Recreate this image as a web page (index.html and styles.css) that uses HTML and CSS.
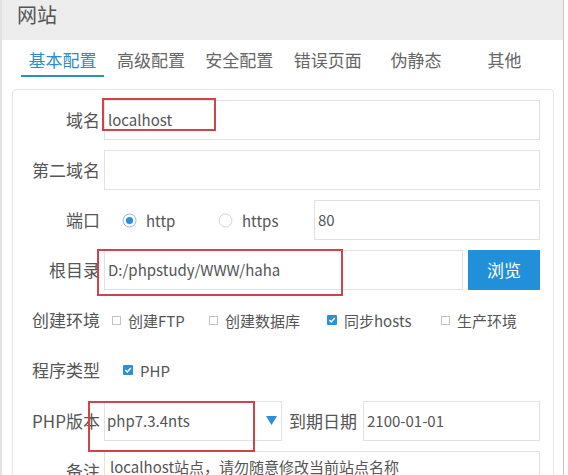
FILE: index.html
```html
<!DOCTYPE html>
<html lang="zh-CN">
<head>
<meta charset="utf-8">
<title>网站</title>
<link rel="stylesheet" href="styles.css">
</head>
<body>
<div class="dialog">
  <div class="header">网站</div>
  <div class="tabs">
    <div class="tab active">基本配置</div>
    <div class="tab">高级配置</div>
    <div class="tab">安全配置</div>
    <div class="tab">错误页面</div>
    <div class="tab">伪静态</div>
    <div class="tab">其他</div>
  </div>
  <div class="panel">
    <div class="row">
      <div class="label">域名</div>
      <div class="input">localhost</div>
    </div>
    <div class="row">
      <div class="label">第二域名</div>
      <div class="input"></div>
    </div>
    <div class="row">
      <div class="label">端口</div>
      <div class="radio radio-http">
        <svg width="15" height="15" viewBox="0 0 15 15"><circle cx="7.5" cy="7.5" r="6.5" fill="#fff" stroke="#8cc1ea" stroke-width="1"/><circle cx="7.5" cy="7.5" r="3.6" fill="#2b8fd9"/></svg>
        <span>http</span>
      </div>
      <div class="radio radio-https">
        <svg width="15" height="15" viewBox="0 0 15 15"><circle cx="7.5" cy="7.5" r="6.5" fill="#fff" stroke="#d8d8d8" stroke-width="1"/></svg>
        <span>https</span>
      </div>
      <div class="input">80</div>
    </div>
    <div class="row">
      <div class="label">根目录</div>
      <div class="input">D:/phpstudy/WWW/haha</div>
      <div class="btn">浏览</div>
    </div>
    <div class="row">
      <div class="label">创建环境</div>
      <div class="check check-ftp"><span class="box"></span><span>创建FTP</span></div>
      <div class="check check-db"><span class="box"></span><span>创建数据库</span></div>
      <div class="check check-hosts">
        <svg class="box-on" width="10" height="10" viewBox="0 0 10 10"><rect width="10" height="10" rx="1" fill="#2b8fd9"/><path d="M2.3 5.1 L4.2 7 L7.8 3" fill="none" stroke="#fff" stroke-width="1.4"/></svg>
        <span>同步hosts</span>
      </div>
      <div class="check check-prod"><span class="box"></span><span>生产环境</span></div>
    </div>
    <div class="row">
      <div class="label">程序类型</div>
      <div class="check check-php">
        <svg class="box-on" width="10" height="10" viewBox="0 0 10 10"><rect width="10" height="10" rx="1" fill="#2b8fd9"/><path d="M2.3 5.1 L4.2 7 L7.8 3" fill="none" stroke="#fff" stroke-width="1.4"/></svg>
        <span>PHP</span>
      </div>
    </div>
    <div class="row">
      <div class="label">PHP版本</div>
      <div class="select">
        <span>php7.3.4nts</span>
        <svg class="arrow" width="11" height="9" viewBox="0 0 11 9"><polygon points="0,0 11,0 5.5,9" fill="#2b8fd9"/></svg>
      </div>
      <div class="label-inline">到期日期</div>
      <div class="input">2100-01-01</div>
    </div>
    <div class="row row-note">
      <div class="label">备注</div>
      <div class="textarea">localhost站点，请勿随意修改当前站点名称</div>
    </div>
  </div>
</div>
<div class="mark mark-domain"></div>
<div class="mark mark-root"></div>
<div class="mark mark-php"></div>
</body>
</html>
```
FILE: styles.css
```css
* { box-sizing: border-box; }
html, body {
  margin: 0;
  padding: 0;
  width: 568px;
  height: 475px;
  overflow: hidden;
  background: #fff;
  font-family: "Noto Sans CJK SC", "Noto Sans", sans-serif;
  color: #555;
}
.dialog {
  width: 564px;
  height: 475px;
  border-left: 2px solid #e2e2e2;
  border-right: 1px solid #c8c8c8;
  background: #fff;
}
.header {
  height: 40px;
  background: #ededed;
  padding-left: 15px;
  font-size: 20px;
  line-height: 30px;
  color: #555;
}
.tabs {
  display: flex;
  gap: 5.4px;
  padding-left: 19px;
}
.tab {
  width: 83px;
  text-align: center;
  font-size: 17px;
  line-height: 26px;
  padding-top: 7px;
  padding-bottom: 2px;
  border-bottom: 2px solid transparent;
  color: #666;
}
.tab.active {
  color: #2a8dcc;
  border-bottom-color: #2a8dcc;
}
.panel {
  margin: 12px 0 0 10px;
  width: 542px;
  height: 420px;
  border: 1px solid #e6e6e6;
  border-radius: 4px;
  padding: 10px 13px 0 0;
}
.row {
  display: flex;
  align-items: center;
  height: 40px;
  margin-bottom: 10.1px;
}
.label {
  width: 87px;
  flex: none;
  text-align: right;
  font-size: 17px;
  line-height: 40px;
  margin-right: 4px;
  color: #555;
}
.input {
  flex: 1;
  height: 40px;
  border: 1px solid #e2e2e2;
  padding-left: 3px;
  font-size: 15px;
  line-height: 38px;
  color: #555;
  white-space: nowrap;
  overflow: hidden;
}
.radio {
  display: flex;
  align-items: center;
  flex: none;
  font-size: 15px;
  color: #555;
}
.radio svg { margin-right: 9px; }
.radio-http { width: 114px; padding-left: 18px; }
.radio-https { width: 96px; }
.btn {
  flex: none;
  width: 72px;
  height: 40px;
  margin-left: 5px;
  background: #2190d8;
  color: #fff;
  font-size: 17px;
  line-height: 40px;
  text-align: center;
}
.check {
  display: flex;
  align-items: center;
  flex: none;
  font-size: 15px;
  color: #555;
}
.check .box {
  width: 9px;
  height: 9px;
  border: 1px solid #c4c4c4;
  margin-right: 7px;
}
.check .box-on { margin-right: 7px; }
.check-ftp { width: 105px; padding-left: 8px; }
.check-db { width: 118px; }
.check-hosts { width: 114px; }
.check-php { padding-left: 19px; }
.select {
  flex: none;
  width: 178px;
  height: 40px;
  border: 1px solid #e2e2e2;
  display: flex;
  align-items: center;
  padding-left: 2px;
  padding-right: 4px;
  font-size: 15px;
  color: #555;
}
.select .arrow { margin-left: auto; }
.label-inline {
  flex: none;
  margin: 0 6px 0 7px;
  font-size: 17px;
  line-height: 40px;
  color: #555;
}
.row-note { align-items: flex-start; height: 70px; }
.textarea {
  flex: 1;
  height: 70px;
  border: 1px solid #e2e2e2;
  padding: 3px 0 0 5px;
  font-size: 15px;
  line-height: 24px;
  color: #555;
}
.mark {
  position: absolute;
  border: 2px solid #cc4549;
}
.mark-domain { left: 102px; top: 98px; width: 114px; height: 33px; }
.mark-root { left: 97px; top: 249px; width: 246px; height: 47px; }
.mark-php { left: 88px; top: 401px; width: 167px; height: 51px; }
```
